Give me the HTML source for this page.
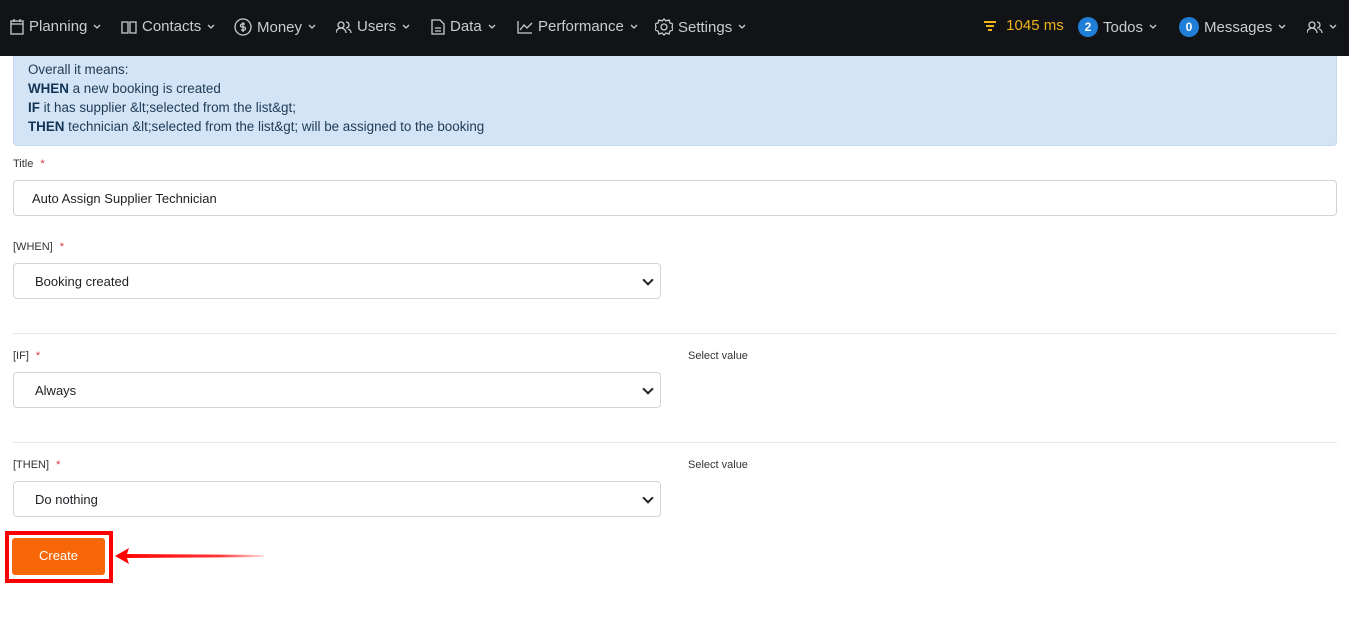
<!DOCTYPE html>
<html><head><meta charset="utf-8"><style>
*{box-sizing:border-box;margin:0;padding:0}
body{width:1349px;height:628px;background:#fff;font-family:"Liberation Sans",sans-serif;position:relative;overflow:hidden;color:#1d2125}
.nav{position:absolute;left:0;top:0;width:1349px;height:56px;background:#121316;color:#c9ccd1;font-size:15px}
.ni{position:absolute;top:18px;display:flex;align-items:center;gap:5px;white-space:nowrap}
.ni svg{stroke:#c9ccd1;fill:none;stroke-width:1.3}
.chev{width:10px;height:10px}
.info{position:absolute;left:13px;top:56px;width:1324px;height:90px;background:#d2e4f5;border:1px solid #c3d9ee;border-top:none;border-radius:0 0 4px 4px;padding:4px 14px;font-size:13.4px;line-height:19px;color:#1f3a55}
.info b{color:#123456}
.lbl{position:absolute;left:13px;font-size:11px;color:#333}
.lbl i{color:#d63939;font-style:normal;margin-left:7px}
.inp{position:absolute;left:13px;height:36px;border:1px solid #d0d4d9;border-radius:4px;font-size:13px;padding:0 18px;line-height:35px;color:#1d2125}
.sel{width:648px;padding-left:21px}
.sel:after{content:"";position:absolute;right:8px;top:12px;width:6px;height:6px;border-right:2px solid #222;border-bottom:2px solid #222;transform:rotate(45deg)}
.hr{position:absolute;left:13px;width:1324px;height:1px;background:#e3e5e8}
.sv{position:absolute;left:688px;font-size:11px;color:#333}
.badge{display:inline-block;width:20px;height:20px;border-radius:50%;background:#1f7fd8;color:#fff;font-size:12px;font-weight:bold;text-align:center;line-height:20px}
</style></head><body>
<div class="nav">
<div class="ni" style="left:10px"><svg width="14" height="16" viewBox="0 0 14 16"><rect x="1" y="2" width="12" height="13"/><path d="M1 5h12M4 0v3M10 0v3"/></svg>Planning<svg class="chev" viewBox="0 0 10 10"><path d="M2 3l3 3 3-3"/></svg></div>
<div class="ni" style="left:121px"><svg width="16" height="14" viewBox="0 0 16 14"><path d="M1 2h6v11H1zM9 2h6v11H9z"/></svg>Contacts<svg class="chev" viewBox="0 0 10 10"><path d="M2 3l3 3 3-3"/></svg></div>
<div class="ni" style="left:234px"><svg width="18" height="18" viewBox="0 0 18 18"><circle cx="9" cy="9" r="8"/><path d="M11 6H8a1.5 1.5 0 000 3h2a1.5 1.5 0 010 3H7M9 4v10"/></svg>Money<svg class="chev" viewBox="0 0 10 10"><path d="M2 3l3 3 3-3"/></svg></div>
<div class="ni" style="left:336px"><svg width="16" height="14" viewBox="0 0 16 14"><circle cx="5" cy="5" r="3"/><path d="M0 13a5 5 0 0110 0M10 2a3 3 0 010 6M12 9a4 4 0 013 4"/></svg>Users<svg class="chev" viewBox="0 0 10 10"><path d="M2 3l3 3 3-3"/></svg></div>
<div class="ni" style="left:431px"><svg width="14" height="16" viewBox="0 0 14 16"><path d="M1 1h8l4 4v10H1zM4 9h6M4 12h6"/></svg>Data<svg class="chev" viewBox="0 0 10 10"><path d="M2 3l3 3 3-3"/></svg></div>
<div class="ni" style="left:517px"><svg width="16" height="14" viewBox="0 0 16 14"><path d="M1 1v12h14M3 10l4-5 3 3 5-5"/></svg>Performance<svg class="chev" viewBox="0 0 10 10"><path d="M2 3l3 3 3-3"/></svg></div>
<div class="ni" style="left:655px"><svg width="18" height="18" viewBox="0 0 18 18"><circle cx="9" cy="9" r="3"/><path d="M9 1l2 2 3-1 1 3 3 1-1 3 1 3-3 1-1 3-3-1-2 2-2-2-3 1-1-3-3-1 1-3-1-3 3-1 1-3 3 1z"/></svg>Settings<svg class="chev" viewBox="0 0 10 10"><path d="M2 3l3 3 3-3"/></svg></div>
<div class="ni" style="left:983px;top:17px;color:#f1b51b"><svg width="14" height="12" viewBox="0 0 14 12" style="stroke:#f1b51b;stroke-width:2"><path d="M1 2h12M3 6h8M5 10h4"/></svg>&nbsp;1045 ms</div>
<div class="ni" style="left:1078px;top:17px"><span class="badge">2</span>Todos<svg class="chev" viewBox="0 0 10 10"><path d="M2 3l3 3 3-3"/></svg></div>
<div class="ni" style="left:1179px;top:17px"><span class="badge">0</span>Messages<svg class="chev" viewBox="0 0 10 10"><path d="M2 3l3 3 3-3"/></svg></div>
<div class="ni" style="left:1307px;top:20px"><svg width="16" height="14" viewBox="0 0 16 14"><circle cx="5" cy="5" r="3"/><path d="M0 13a5 5 0 0110 0M10 2a3 3 0 010 6M12 9a4 4 0 013 4"/></svg><svg class="chev" viewBox="0 0 10 10"><path d="M2 3l3 3 3-3"/></svg></div>
</div>
<div class="info">Overall it means:<br><b>WHEN</b> a new booking is created<br><b>IF</b> it has supplier &amp;lt;selected from the list&amp;gt;<br><b>THEN</b> technician &amp;lt;selected from the list&amp;gt; will be assigned to the booking</div>
<div class="lbl" style="top:158px">Title<i>*</i></div>
<div class="inp" style="top:180px;width:1324px">Auto Assign Supplier Technician</div>
<div class="lbl" style="top:241px">[WHEN]<i>*</i></div>
<div class="inp sel" style="top:263px">Booking created</div>
<div class="hr" style="top:333px"></div>
<div class="lbl" style="top:350px">[IF]<i>*</i></div>
<div class="sv" style="top:350px">Select value</div>
<div class="inp sel" style="top:372px">Always</div>
<div class="hr" style="top:442px"></div>
<div class="lbl" style="top:459px">[THEN]<i>*</i></div>
<div class="sv" style="top:459px">Select value</div>
<div class="inp sel" style="top:481px">Do nothing</div>
<div style="position:absolute;left:5px;top:531px;width:108px;height:52px;background:#f00"></div>
<div style="position:absolute;left:9px;top:535px;width:100px;height:44px;background:#fff"></div>
<div style="position:absolute;left:12px;top:538px;width:93px;height:37px;background:#f76707;border-radius:3px;color:#fff;font-size:13px;text-align:center;line-height:35px">Create</div>
<svg style="position:absolute;left:114px;top:545px" width="152" height="22" viewBox="0 0 152 22"><defs><linearGradient id="g"><stop offset="0" stop-color="#f00"/><stop offset="0.7" stop-color="#f33"/><stop offset="1" stop-color="#fdd"/></linearGradient></defs><path d="M1 11L15 3l-2 6L150 10v2L13 13l2 6z" fill="url(#g)"/></svg>
</body></html>
